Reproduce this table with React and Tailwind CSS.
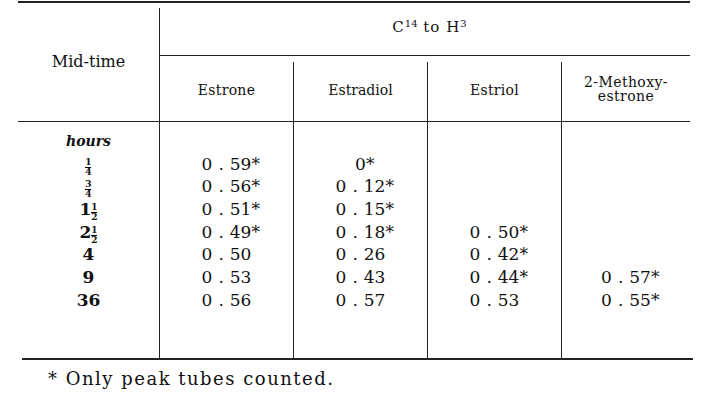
const serif = { fontFamily: '"DejaVu Serif", "Liberation Serif", serif' };

const rows = [
  ["1/4", "0.59*", "0*", "", ""],
  ["3/4", "0.56*", "0.12*", "", ""],
  ["1 1/2", "0.51*", "0.15*", "", ""],
  ["2 1/2", "0.49*", "0.18*", "0.50*", ""],
  ["4", "0.50", "0.26", "0.42*", ""],
  ["9", "0.53", "0.43", "0.44*", "0.57*"],
  ["36", "0.56", "0.57", "0.53", "0.55*"],
];

const Frac = ({ top, bottom }) => (
  <span className="inline-flex flex-col items-center align-middle translate-y-[2px] text-[9px] leading-[7px] font-bold">
    <span>{top}</span>
    <span className="w-[6px] my-[1px] border-t border-black"></span>
    <span>{bottom}</span>
  </span>
);

const Time = ({ value }) => {
  const parts = value.split(" ");
  const frac = parts[parts.length - 1].includes("/") ? parts.pop() : null;
  const [top, bottom] = frac ? frac.split("/") : [];
  return (
    <span>
      {parts.join(" ")}
      {frac && <Frac top={top} bottom={bottom} />}
    </span>
  );
};

// number centred on its digits, the star hangs to the right
const Num = ({ value }) => {
  if (!value) return null;
  const star = value.endsWith("*");
  const num = star ? value.slice(0, -1) : value;
  const [a, b] = num.split(".");
  return (
    <span className="whitespace-nowrap">
      {star && <span className="invisible">*</span>}
      {a}
      {b !== undefined && (
        <>
          <span className="mx-[6px]">.</span>
          {b}
        </>
      )}
      {star && <span>*</span>}
    </span>
  );
};

const cols = "grid grid-cols-[142px_134px_134px_134px_128px]";

export default function App() {
  return (
    <div className="w-[715px] h-[406px] bg-white text-[#111]" style={serif}>
      <div className="ml-[18px] pt-[1px] w-[672px]">
        {/* header */}
        <div className={`${cols} border-t-2 border-b border-[#222]`}>
          <div className="row-span-2 border-r border-[#222] flex items-center justify-center text-[16px] pb-[6px] mt-[5px]">
            Mid-time
          </div>
          <div className="col-span-4 h-[53px] border-b border-[#222] flex items-center justify-center text-[15px] tracking-[1px] pb-[3px] pl-[10px]">
            <span>
              C<sup className="text-[10px] tracking-normal">14</sup> to H<sup className="text-[10px]">3</sup>
            </span>
          </div>
          <div className="h-[59px] border-r border-[#222] mt-[6px] flex items-center justify-center text-[14px] tracking-[0.3px] pb-[3px]">
            Estrone
          </div>
          <div className="h-[59px] border-r border-[#222] mt-[6px] flex items-center justify-center text-[14px] pb-[3px]">
            Estradiol
          </div>
          <div className="h-[59px] border-r border-[#222] mt-[6px] flex items-center justify-center text-[14px] tracking-[0.3px] pb-[3px]">
            Estriol
          </div>
          <div className="h-[59px] flex flex-col items-center justify-center text-[14px] leading-[14px] tracking-[0.4px] pb-[5px] mt-[6px]">
            <span>2-Methoxy-</span>
            <span>estrone</span>
          </div>
        </div>

        {/* body */}
        <div className={`${cols} text-[17px]`}>
          <div className="border-r border-[#222] pt-[8px] pb-[46px] flex flex-col items-center">
            <div className="h-[23px] flex items-center italic font-bold text-[14px]">hours</div>
            {rows.map((r, i) => (
              <div key={i} className="h-[22.7px] flex items-center font-bold">
                <Time value={r[0]} />
              </div>
            ))}
          </div>
          {[1, 2, 3, 4].map((c) => (
            <div
              key={c}
              className={`pt-[8px] pb-[46px] flex flex-col items-center ${c < 4 ? "border-r border-[#222]" : ""}`}
            >
              <div className="h-[23px]"></div>
              {rows.map((r, i) => (
                <div key={i} className="h-[22.7px] flex items-center">
                  <Num value={r[c]} />
                </div>
              ))}
            </div>
          ))}
        </div>
      </div>
      <div className="ml-[22px] w-[671px] border-t-2 border-[#222]"></div>
      <p className="ml-[48px] mt-[8px] text-[18px] tracking-[1.5px] leading-[22px]">* Only peak tubes counted.</p>
    </div>
  );
}
